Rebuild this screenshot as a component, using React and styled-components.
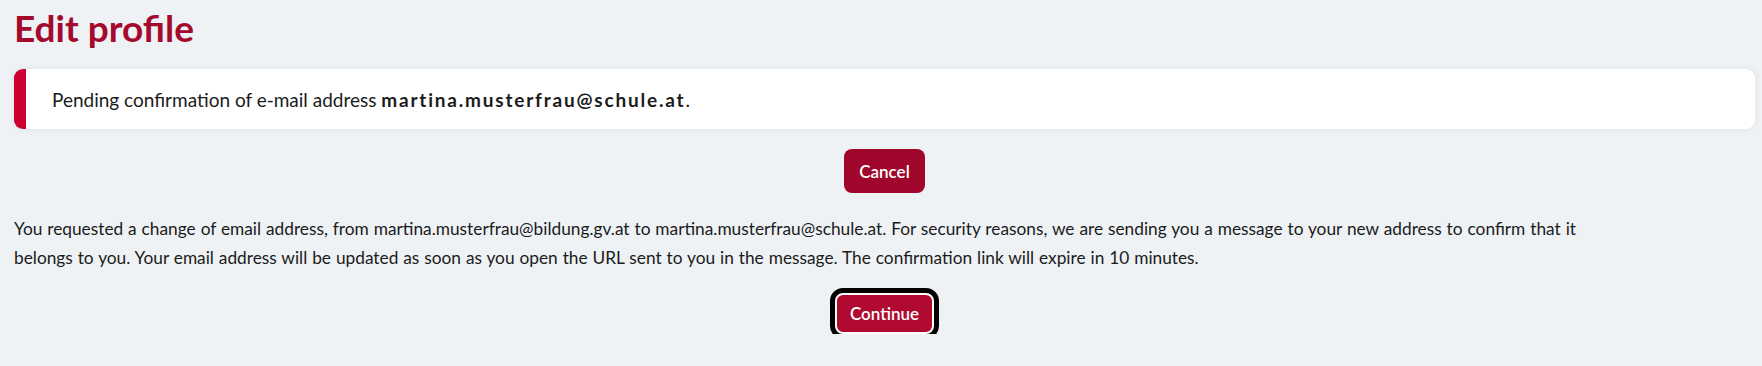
import styled, { createGlobalStyle } from "styled-components";

const GlobalStyle = createGlobalStyle`
  html, body {
    margin: 0;
    padding: 0;
    background: #eef2f5;
  }
  body {
    font-family: "Lato", "Noto Sans", sans-serif;
    color: #1b1b1b;
  }
`;

const Page = styled.main`
  padding: 0 7px 0 14px;
`;

const Title = styled.h1`
  margin: 0;
  padding-top: 6px;
  font-size: 37px;
  line-height: 44px;
  font-weight: 700;
  color: #a50a2e;
`;

const Alert = styled.div`
  margin-top: 19px;
  height: 60px;
  display: flex;
  align-items: center;
  background: #fff;
  border-radius: 9px;
  border-left: 12px solid #cc0033;
  box-shadow: 0 0 6px rgba(30, 50, 70, 0.08);
  padding-left: 26px;
  font-size: 19px;

  strong {
    letter-spacing: 1.8px;
  }
`;

const Actions = styled.div`
  display: flex;
  justify-content: center;
  margin-top: ${(p) => p.$top}px;
`;

const Button = styled.button`
  font-family: inherit;
  font-size: 17px;
  font-weight: 600;
  color: #fff;
  background: ${(p) => (p.$focused ? "#b00a30" : "#a0062b")};
  border: ${(p) => (p.$focused ? "2px solid #fff" : "none")};
  outline: ${(p) => (p.$focused ? "5px solid #000" : "none")};
  border-radius: 8px;
  height: ${(p) => (p.$focused ? 41 : 44)}px;
  padding: 0 ${(p) => (p.$focused ? 13 : 15)}px;
  cursor: pointer;
`;

const Text = styled.p`
  margin: 21px 0 0;
  max-width: 1585px;
  font-size: 17.3px;
  line-height: 29px;
  word-spacing: 0.5px;
`;

export default function App() {
  return (
    <>
      <GlobalStyle />
      <Page>
        <Title>Edit profile</Title>
        <Alert>
          <span>
            Pending confirmation of e-mail address{" "}
            <strong>martina.musterfrau@schule.at</strong>.
          </span>
        </Alert>
        <Actions $top={20}>
          <Button>Cancel</Button>
        </Actions>
        <Text>
          You requested a change of email address, from
          martina.musterfrau@bildung.gv.at to martina.musterfrau@schule.at. For
          security reasons, we are sending you a message to your new address to
          confirm that it belongs to you. Your email address will be updated as
          soon as you open the URL sent to you in the message. The confirmation
          link will expire in 10 minutes.
        </Text>
        <Actions $top={21}>
          <Button $focused>Continue</Button>
        </Actions>
      </Page>
    </>
  );
}
